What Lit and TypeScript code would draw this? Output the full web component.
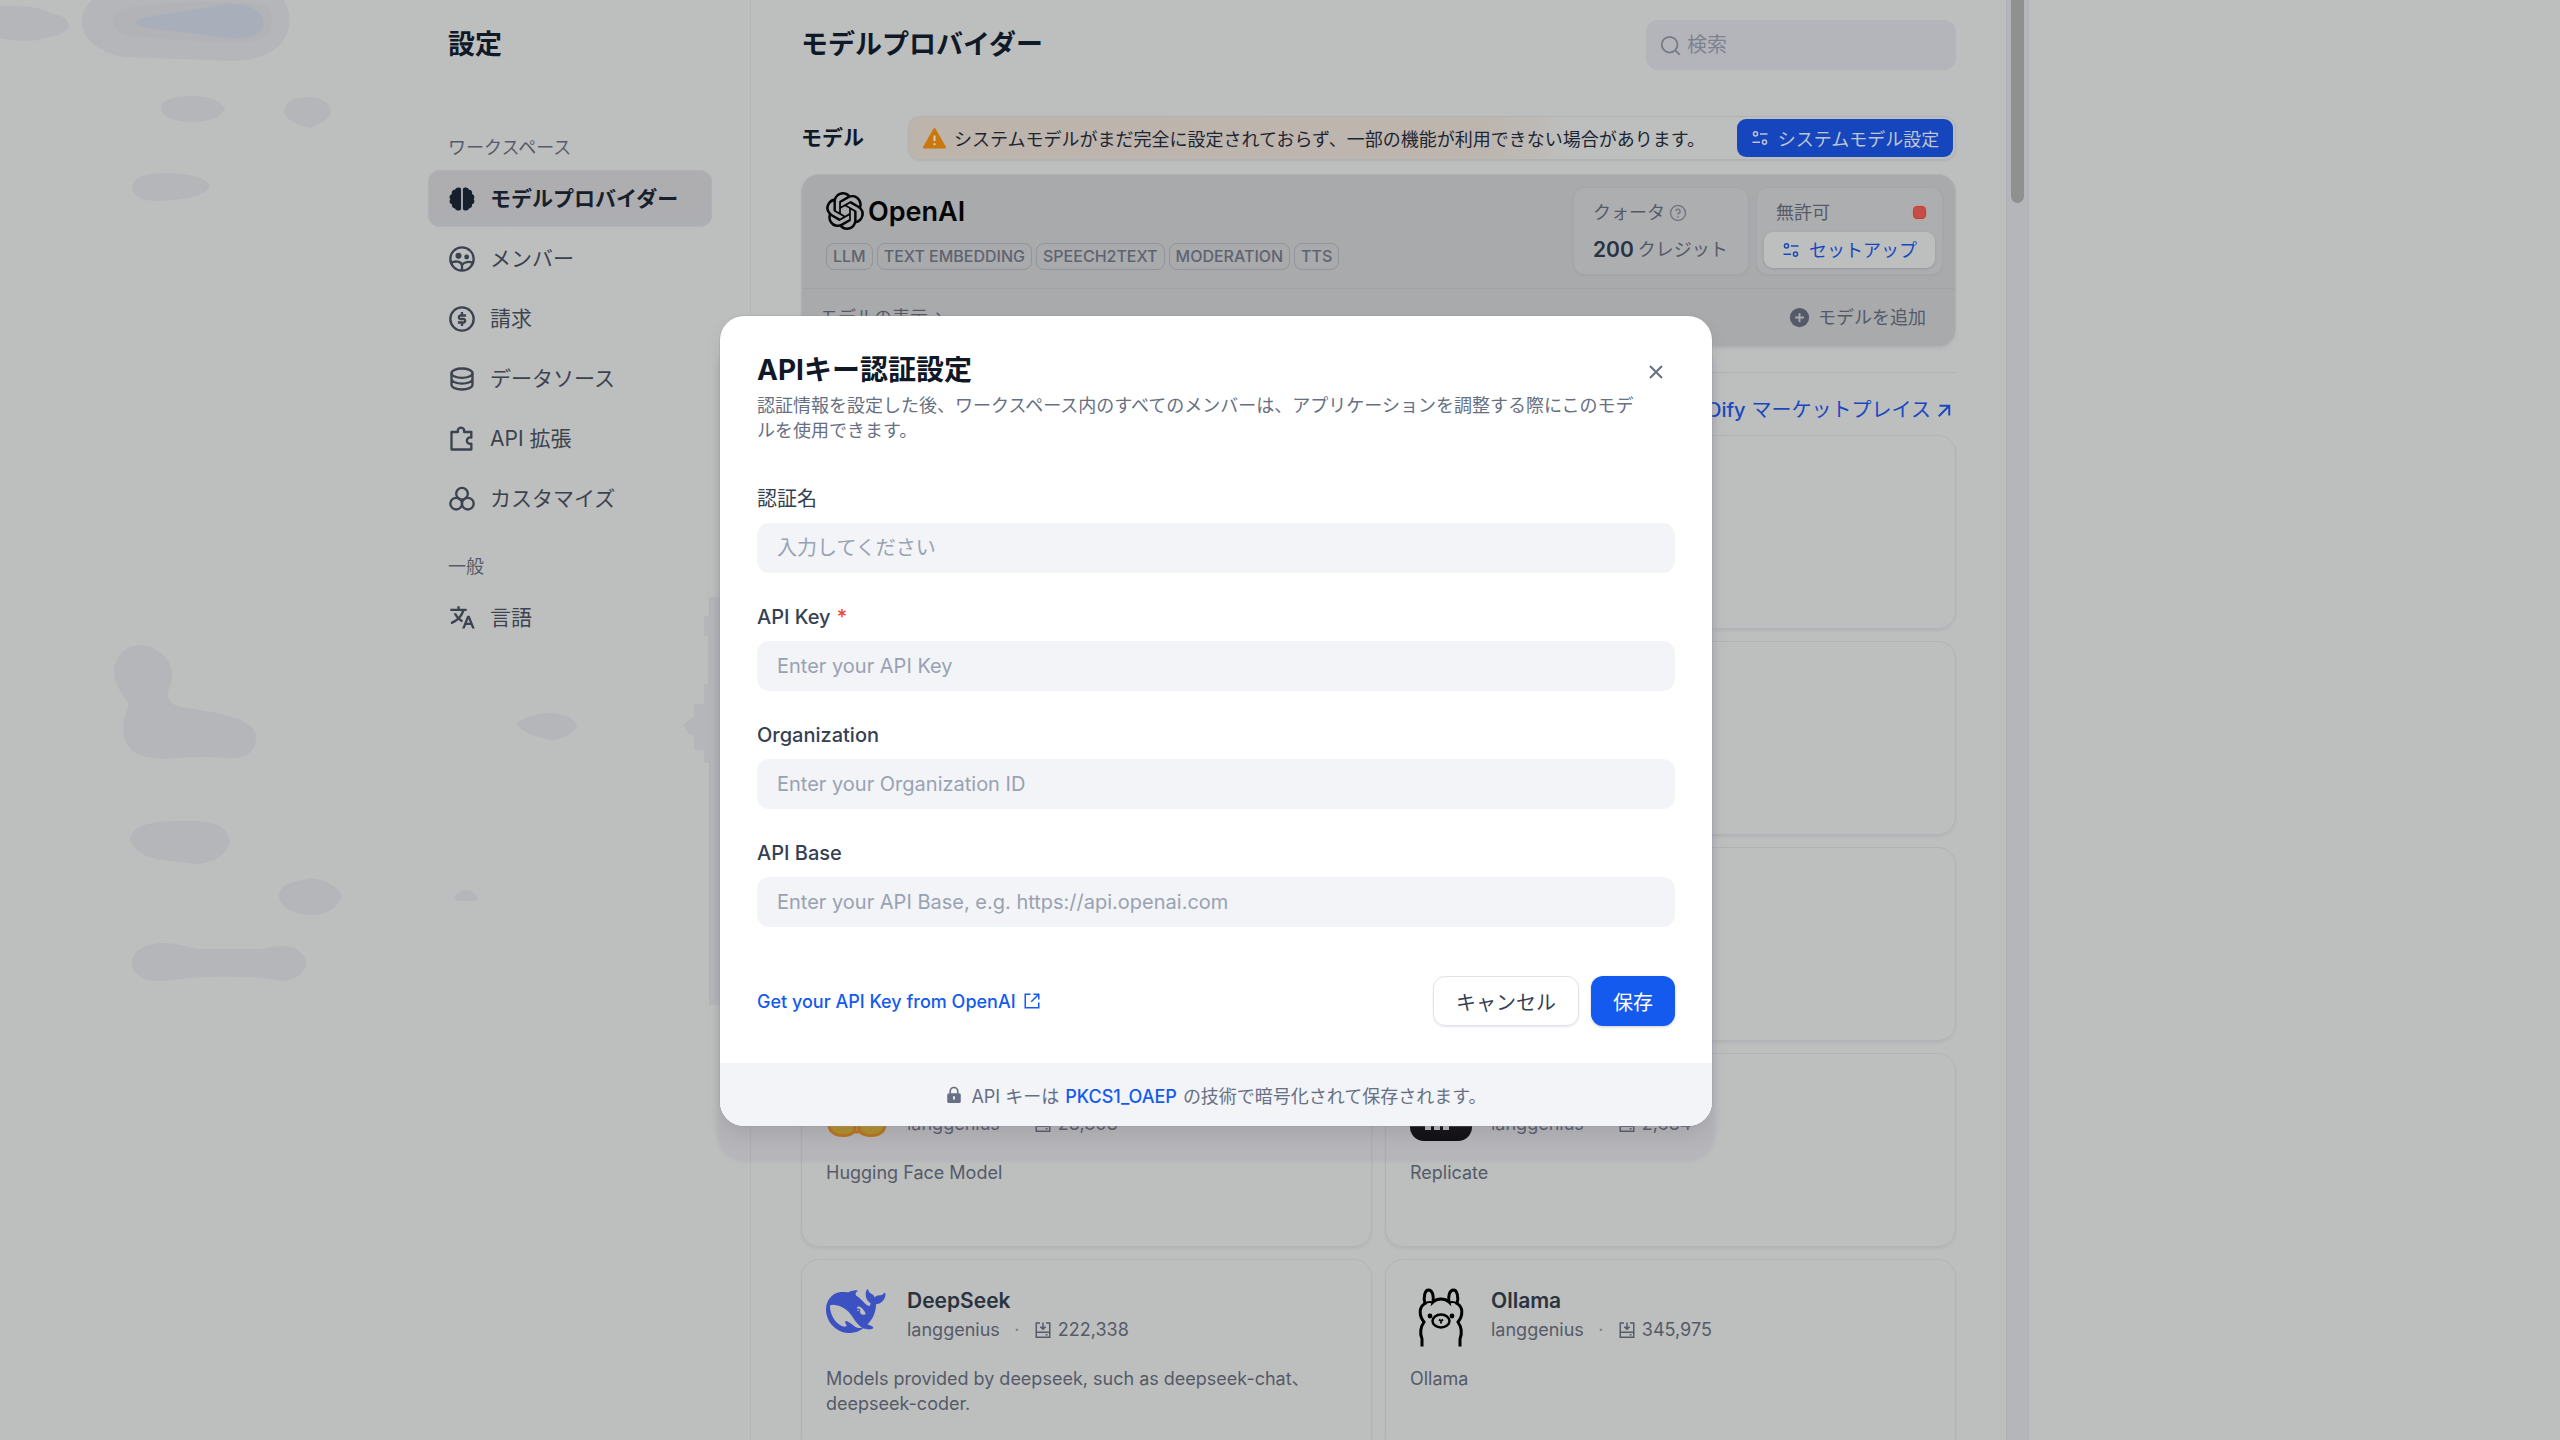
import { LitElement, html, css, svg, nothing, TemplateResult } from "lit";
import { customElement } from "lit/decorators.js";
import { classMap } from "lit/directives/class-map.js";

const stroke = (body: TemplateResult, cls = "") => html`
  <svg class="icon ${cls}" viewBox="0 0 24 24" fill="none" stroke="currentColor" stroke-width="2" aria-hidden="true">${body}</svg>`;
const solid = (body: TemplateResult, cls = "") => html`
  <svg class="icon ${cls}" viewBox="0 0 24 24" fill="currentColor" aria-hidden="true">${body}</svg>`;

const icons = {
  brain: solid(svg`<path d="M11.200 3.200C10.200 1.600 7 1.600 6 4 4 4 2.800 5.800 3.400 7.800 1.200 8.600 .8 11 2 12.200 .8 13.600 1.400 16 3.400 16.600 3 18.600 4.400 20.200 6 20.200 7 22.400 10.200 22.400 11.200 20.800ZM12.800 3.200C13.800 1.600 17 1.600 18 4 20 4 21.200 5.800 20.600 7.800 22.800 8.600 23.200 11 22 12.200 23.200 13.600 22.600 16 20.600 16.600 21 18.600 19.600 20.200 18 20.200 17 22.400 13.800 22.400 12.800 20.800Z"/>`, "lg"),
  members: stroke(svg`<circle cx="12" cy="12" r="10"/><circle cx="9" cy="9.300" r="2.600" fill="currentColor" stroke="none"/><circle cx="16" cy="10.300" r="2.100" fill="currentColor" stroke="none"/><path d="M2.500 15.500C6 13.200 11.500 13.800 12 17.500V22M12 17C13.500 14.300 18.500 13.800 21.300 15.500"/>`, "lg"),
  dollar: stroke(svg`<circle cx="12" cy="12" r="10"/><path d="M15.500 9H10.300A1.600 1.600 0 0 0 10.300 12H13.700A1.600 1.600 0 0 1 13.700 15H8.500M12 6V9M12 15V18"/>`, "lg"),
  database: stroke(svg`<ellipse cx="12" cy="7" rx="9" ry="4"/><path d="M3 7V17C3 19.200 7 21 12 21S21 19.200 21 17V7M3 12C3 14.200 7 16 12 16S21 14.200 21 12"/>`, "lg"),
  puzzle: stroke(svg`<path d="M3 6H8.500A2.800 2.800 0 1 1 13.800 6H20V10.800A2.800 2.800 0 1 0 20 16V21H3Z" stroke-linejoin="round"/>`, "lg"),
  filter: stroke(svg`<circle cx="12" cy="7.500" r="5"/><circle cx="7" cy="16" r="5"/><circle cx="17" cy="16" r="5"/>`, "lg"),
  translate: solid(svg`<path d="M18.5 10L22.9 21H20.745L19.544 18H15.454L14.255 21H12.101L16.5 10H18.5ZM10 2V4H16V6L14.0322 6.0006C13.2425 8.36616 11.9988 10.5057 10.4115 12.301C11.1344 12.9457 11.917 13.5176 12.7475 14.0079L11.9969 15.8855C10.9237 15.2781 9.91944 14.5524 8.99961 13.7249C7.21403 15.332 5.10914 16.5553 2.79891 17.2734L2.26257 15.3442C4.2385 14.7203 6.04543 13.6737 7.59042 12.3021C6.46277 11.0281 5.50873 9.57985 4.76742 8.00028L7.00684 8.00037C7.57018 9.03885 8.23979 10.0033 8.99967 10.877C10.2283 9.46508 11.2205 7.81616 11.9095 6.00101L2 6V4H8V2H10ZM17.5 12.8852L16.253 16H18.745L17.5 12.8852Z"/>`, "lg"),
  search: stroke(svg`<circle cx="11" cy="11" r="9"/><path d="M17.500 17.500L22.500 22.500"/>`, "md"),
  warning: html`<svg class="icon warn" viewBox="0 0 24 24" aria-hidden="true"><path fill="#c8780c" d="M12.900 2.500L23 20.200A1 1 0 0 1 22.200 21.500H1.800A1 1 0 0 1 1 20.200L11.100 2.500A1 1 0 0 1 12.900 2.500Z"/><path fill="#d8cdbf" d="M11 9H13V14.500H11ZM11 16.500H13V18.500H11Z"/></svg>`,
  sliders: stroke(svg`<circle cx="6" cy="6.500" r="2.700"/><path d="M12 6.500H22M2 17.500H12"/><circle cx="18" cy="17.500" r="2.700"/>`),
  help: stroke(svg`<circle cx="12" cy="12" r="10"/><path d="M9.300 9.500A2.700 2.700 0 1 1 12 12.500V14M12 16V18"/>`),
  plus: html`<svg class="icon md" viewBox="0 0 24 24" aria-hidden="true"><circle cx="12" cy="12" r="11" fill="currentColor"/><path d="M12 7V17M7 12H17" stroke="#a9aaac" stroke-width="2.200"/></svg>`,
  chevron: stroke(svg`<path d="M9 5L16 12L9 19"/>`),
  arrow: stroke(svg`<path d="M5 19L19 5M6 5H19V18" stroke-width="2.600"/>`),
  close: stroke(svg`<path d="M4 4L20 20M20 4L4 20" stroke-width="2.800"/>`),
  external: stroke(svg`<path d="M10 3H3V21H21V14M14 3H21V10M21 3L11 13"/>`),
  lock: html`<svg class="icon" viewBox="0 0 24 24" aria-hidden="true"><path d="M7 10V7A5 5 0 0 1 17 7V10" fill="none" stroke="currentColor" stroke-width="2.200"/><rect x="3" y="9.500" width="18" height="13" rx="2" fill="currentColor"/><path d="M12 13.500V18" stroke="#f2f4f7" stroke-width="2.400"/></svg>`,
  install: stroke(svg`<path d="M8 2.500H3V21.500H21V2.500H16M3 15H21M12 2V10.500M8.500 7.500L12 11L15.500 7.500M15.500 18.300H18"/>`),
};

const openaiMark = html`
  <svg class="mark" viewBox="0 0 24 24" fill="currentColor" aria-hidden="true"><path d="M22.2819 9.8211a5.9847 5.9847 0 0 0-.5157-4.9108 6.0462 6.0462 0 0 0-6.5098-2.9A6.0651 6.0651 0 0 0 4.9807 4.1818a5.9847 5.9847 0 0 0-3.9977 2.9 6.0462 6.0462 0 0 0 .7427 7.0966 5.98 5.98 0 0 0 .511 4.9107 6.051 6.051 0 0 0 6.5146 2.9001A5.9847 5.9847 0 0 0 13.2599 24a6.0557 6.0557 0 0 0 5.7718-4.2058 5.9894 5.9894 0 0 0 3.9977-2.9001 6.0557 6.0557 0 0 0-.7475-7.0729zm-9.022 12.6081a4.4755 4.4755 0 0 1-2.8764-1.0408l.1419-.0804 4.7783-2.7582a.7948.7948 0 0 0 .3927-.6813v-6.7369l2.02 1.1686a.071.071 0 0 1 .038.052v5.5826a4.504 4.504 0 0 1-4.4945 4.4944zm-9.6607-4.1254a4.4708 4.4708 0 0 1-.5346-3.0137l.142.0852 4.783 2.7582a.7712.7712 0 0 0 .7806 0l5.8428-3.3685v2.3324a.0804.0804 0 0 1-.0332.0615L9.74 19.9502a4.4992 4.4992 0 0 1-6.1408-1.6464zM2.3408 7.8956a4.485 4.485 0 0 1 2.3655-1.9728V11.6a.7664.7664 0 0 0 .3879.6765l5.8144 3.3543-2.0201 1.1685a.0757.0757 0 0 1-.071 0l-4.8303-2.7865A4.504 4.504 0 0 1 2.3408 7.872zm16.5963 3.8558L13.1038 8.364 15.1192 7.2a.0757.0757 0 0 1 .071 0l4.8303 2.7913a4.4944 4.4944 0 0 1-.6765 8.1042v-5.6772a.79.79 0 0 0-.407-.667zm2.0107-3.0231l-.142-.0852-4.7735-2.7818a.7759.7759 0 0 0-.7854 0L9.409 9.2297V6.8974a.0662.0662 0 0 1 .0284-.0615l4.8303-2.7866a4.4992 4.4992 0 0 1 6.6802 4.66zM8.3065 12.863l-2.02-1.1638a.0804.0804 0 0 1-.038-.0567V6.0742a4.4992 4.4992 0 0 1 7.3757-3.4537l-.142.0805L8.704 5.459a.7948.7948 0 0 0-.3927.6813zm1.0976-2.3654l2.602-1.4998 2.6069 1.4998v2.9994l-2.5974 1.4997-2.6067-1.4997Z"/></svg>`;

const logos: Record<string, TemplateResult> = {
  hugging: html`
    <svg class="logo" viewBox="0 0 62 62" aria-hidden="true">
      <circle cx="31" cy="28" r="25" fill="#c09c1d" stroke="#c17512" stroke-width="3"/>
      <path d="M3 46C3 40 9 38 14 42C18 34 28 40 29 49C28 57 17 58 9 55C5 53 3 50 3 46Z" fill="#b9931f" stroke="#c17512" stroke-width="3"/>
      <path d="M59 46C59 40 53 38 48 42C44 34 34 40 33 49C34 57 45 58 53 55C57 53 59 50 59 46Z" fill="#b9931f" stroke="#c17512" stroke-width="3"/>
    </svg>`,
  replicate: html`
    <svg class="logo" viewBox="0 0 62 62" aria-hidden="true">
      <rect width="62" height="62" rx="14" fill="#000"/>
      <path d="M15 51V14H46V20H21V51ZM24 51V24H46V30H30V51ZM33 51V33H46V39H39V51Z" fill="#bdbfbe"/>
    </svg>`,
  deepseek: html`
    <svg class="logo" viewBox="0 1.300 25 25" fill="#3c51c2" aria-hidden="true"><path d="M23.748 4.482c-.254-.124-.364.113-.512.234-.051.039-.094.09-.137.136-.372.397-.806.657-1.373.626-.829-.046-1.537.214-2.163.848-.133-.782-.575-1.248-1.247-1.548-.352-.156-.708-.311-.955-.65-.172-.241-.219-.51-.305-.774-.055-.16-.11-.323-.293-.35-.2-.031-.278.136-.356.276-.313.572-.434 1.202-.422 1.84.027 1.436.633 2.58 1.838 3.393.137.093.172.187.129.323-.082.28-.18.552-.266.833-.055.179-.137.217-.329.14a5.526 5.526 0 01-1.736-1.18c-.857-.828-1.631-1.742-2.597-2.458a11.365 11.365 0 00-.689-.471c-.985-.957.13-1.743.388-1.836.27-.098.093-.432-.779-.428-.872.004-1.67.295-2.687.684a3.055 3.055 0 01-.465.137 9.597 9.597 0 00-2.883-.102c-1.885.21-3.39 1.102-4.497 2.623C.082 8.606-.231 10.684.152 12.85c.403 2.284 1.569 4.175 3.36 5.653 1.858 1.533 3.997 2.284 6.438 2.14 1.482-.085 3.133-.284 4.994-1.86.47.234.962.327 1.78.397.63.059 1.236-.03 1.705-.128.735-.156.684-.837.419-.961-2.155-1.004-1.682-.595-2.113-.926 1.096-1.296 2.746-2.642 3.392-7.003.05-.347.007-.565 0-.845-.004-.17.035-.237.23-.256a4.173 4.173 0 001.545-.475c1.396-.763 1.96-2.015 2.093-3.517.02-.23-.004-.467-.247-.588zM11.581 18c-2.089-1.642-3.102-2.183-3.52-2.16-.392.024-.321.471-.235.763.09.288.207.486.371.739.114.167.192.416-.113.603-.673.416-1.842-.14-1.897-.167-1.361-.802-2.5-1.86-3.301-3.307-.774-1.393-1.224-2.887-1.298-4.482-.02-.386.093-.522.477-.592a4.696 4.696 0 011.529-.039c2.132.312 3.946 1.265 5.468 2.774.868.86 1.525 1.887 2.202 2.891.72 1.066 1.494 2.082 2.48 2.914.348.292.625.514.891.677-.802.09-2.14.11-3.054-.614zm1-6.44a.306.306 0 01.415-.287.302.302 0 01.2.288.306.306 0 01-.31.307.303.303 0 01-.304-.308zm3.11 1.596c-.2.081-.399.151-.59.16a1.245 1.245 0 01-.798-.254c-.274-.23-.47-.358-.552-.758a1.73 1.73 0 01.016-.588c.07-.327-.008-.537-.239-.727-.187-.156-.426-.199-.688-.199a.559.559 0 01-.254-.078c-.11-.054-.2-.19-.114-.358.028-.054.16-.186.192-.21.356-.202.767-.136 1.146.016.352.144.618.408 1.001.782.391.451.462.576.685.914.176.265.336.537.445.848.067.195-.019.354-.25.452z"/></svg>`,
  ollama: html`
    <svg class="logo" viewBox="0 0 62 62" fill="none" stroke="#000" stroke-width="3" aria-hidden="true">
      <path d="M12 61.500V54C10 49 10 43 14 37C9 31 8.500 22 15 18.500C13 12 15 5 18.500 5C22.500 5 24 11 23 17C27 13 35 13 39 17C38 11 39.500 5 43.500 5C47 5 49 12 47 18.500C53.500 22 53 31 48 37C52 43 52 49 50 54V61.500"/>
      <path d="M15 18.500C17 17 20 16.500 23 17.500M47 18.500C45 17 42 16.500 39 17.500" stroke-width="2"/>
      <ellipse cx="31" cy="36" rx="8.500" ry="6.500" stroke-width="2.500"/>
      <path d="M29 34.500L31 36L33 34.500M31 36V38.500" stroke-width="1.800"/>
      <circle cx="20" cy="31" r="2.400" fill="#000" stroke="none"/><circle cx="42" cy="31" r="2.400" fill="#000" stroke="none"/>
    </svg>`,
};

interface NavItem { label: string; icon: TemplateResult; active?: boolean }
interface Provider { logo?: string; name?: string; installs?: string; text?: string }

const workspaceNav: NavItem[] = [
  { label: "モデルプロバイダー", icon: icons.brain, active: true },
  { label: "メンバー", icon: icons.members },
  { label: "請求", icon: icons.dollar },
  { label: "データソース", icon: icons.database },
  { label: "API 拡張", icon: icons.puzzle },
  { label: "カスタマイズ", icon: icons.filter },
];
const generalNav: NavItem[] = [{ label: "言語", icon: icons.translate }];

const providers: Provider[] = [
  {}, {}, {}, {}, {}, {},
  { logo: "hugging", installs: "28,308", text: "Hugging Face Model" },
  { logo: "replicate", installs: "2,684", text: "Replicate" },
  { logo: "deepseek", name: "DeepSeek", installs: "222,338", text: "Models provided by deepseek, such as deepseek-chat、deepseek-coder." },
  { logo: "ollama", name: "Ollama", installs: "345,975", text: "Ollama" },
];

const fields = [
  { id: "name", label: "認証名", placeholder: "入力してください", required: false },
  { id: "key", label: "API Key", placeholder: "Enter your API Key", required: true },
  { id: "org", label: "Organization", placeholder: "Enter your Organization ID", required: false },
  { id: "base", label: "API Base", placeholder: "Enter your API Base, e.g. https://api.openai.com", required: false },
];

const shared = css`
  * { box-sizing: border-box; }
  h1, h2, h3, p, ul { margin: 0; padding: 0; font-size: inherit; font-weight: inherit; }
  ul { list-style: none; }
  a { color: inherit; text-decoration: none; }
  button, input { font: inherit; color: inherit; border: 0; background: none; padding: 0; margin: 0; }
  button { cursor: pointer; }
  .icon { width: 18px; height: 18px; flex: none; display: block; }
  .icon.md { width: 21px; height: 21px; }
  .icon.lg { width: 28px; height: 28px; }
`;

@customElement("settings-nav")
class SettingsNav extends LitElement {
  static styles = [shared, css`
    :host { display: flex; justify-content: flex-end; padding: 23px 38px 0 24px; border-right: 1px solid #b4b5b7; }
    .nav { width: 284px; }
    .title { padding-left: 20px; font-size: 27px; line-height: 44px; font-weight: 600; color: #101927; }
    .group { padding: 0 20px; margin-top: 65px; font-size: 18px; line-height: 32px; color: #575b69; }
    .group.second { margin-top: 24px; }
    .list { display: flex; flex-direction: column; gap: 3px; margin-top: 6px; }
    .item { display: flex; align-items: center; gap: 14px; width: 100%; height: 57px; padding: 0 20px; border-radius: 12px; font-size: 21px; line-height: 30px; color: #3c4350; text-align: left; }
    .item.active { background: linear-gradient(#aeadaf, #adaeb2); font-weight: 600; color: #16202c; box-shadow: inset 0 0 0 1px #b1b2b5; }
  `];
  private item(n: NavItem) {
    return html`<li><button class=${classMap({ item: true, active: !!n.active })}>${n.icon}<span>${n.label}</span></button></li>`;
  }
  render() {
    return html`
      <nav class="nav">
        <h1 class="title">設定</h1>
        <h2 class="group">ワークスペース</h2>
        <ul class="list">${workspaceNav.map((n) => this.item(n))}</ul>
        <h2 class="group second">一般</h2>
        <ul class="list">${generalNav.map((n) => this.item(n))}</ul>
      </nav>`;
  }
}

@customElement("openai-card")
class OpenaiCard extends LitElement {
  static styles = [shared, css`
    :host { display: block; border: 1px solid #b0b1b4; border-radius: 18px; background: #a9aaac; font-size: 18px; line-height: 25px; color: #555a68; box-shadow: 0 2px 3px #b4b5b8; }
    .head { display: flex; justify-content: space-between; padding: 12px 12px 13px 24px; border-bottom: 1px solid #a2a3a6; }
    .brand { display: flex; align-items: center; gap: 4px; height: 48px; font-size: 27px; font-weight: 600; color: #060606; }
    .mark { width: 38px; height: 38px; }
    .tags { display: flex; gap: 4px; margin-top: 8px; }
    .tag { padding: 0 6px; border: 1px solid #93959e; border-radius: 8px; font-size: 16px; line-height: 25px; font-weight: 500; color: #5e6371; }
    .boxes { display: flex; gap: 7px; }
    .box { height: 88px; border: 1px solid #a6a7aa; border-radius: 12px; background: #adaeb0; box-shadow: 0 1px 2px #a2a3a6; }
    .quota { padding: 12px 19px; width: 176px; }
    .row { display: flex; align-items: center; gap: 4px; white-space: nowrap; }
    .quota .row + .row { margin-top: 12px; }
    .quota .icon { color: #757984; }
    .amount { font-size: 21px; font-weight: 600; color: #2a3341; }
    .auth { padding: 12px 7px 6px; width: 187px; }
    .auth .row { justify-content: space-between; padding: 0 9px 0 12px; }
    .dot { width: 13px; height: 13px; border-radius: 4px; border: 1px solid #c53a33; background: #c44e49; box-shadow: 0 0 0 2px #b4a9a8; }
    .setup { display: flex; align-items: center; justify-content: center; gap: 9px; width: 100%; height: 36px; margin-top: 7px; border-radius: 9px; background: #bdbfbe; color: #1848c0; box-shadow: 0 1px 3px #97989b; }
    .foot { display: flex; align-items: center; justify-content: space-between; padding: 0 29px 0 18px; height: 57px; }
    .foot button { display: flex; align-items: center; gap: 8px; }
    .foot .show { gap: 2px; }
  `];
  render() {
    return html`
      <div class="head">
        <div>
          <div class="brand">${openaiMark}<span>OpenAI</span></div>
          <div class="tags">${["LLM", "TEXT EMBEDDING", "SPEECH2TEXT", "MODERATION", "TTS"].map((t) => html`<span class="tag">${t}</span>`)}</div>
        </div>
        <div class="boxes">
          <div class="box quota">
            <div class="row">クォータ ${icons.help}</div>
            <div class="row"><span class="amount">200</span>クレジット</div>
          </div>
          <div class="box auth">
            <div class="row">無許可<span class="dot"></span></div>
            <button class="setup">${icons.sliders}セットアップ</button>
          </div>
        </div>
      </div>
      <div class="foot">
        <button class="show">モデルの表示${icons.chevron}</button>
        <button>${icons.plus}モデルを追加</button>
      </div>`;
  }
}

@customElement("provider-card")
class ProviderCard extends LitElement {
  static properties = { data: { attribute: false } };
  declare data: Provider;
  static styles = [shared, css`
    :host { display: block; min-height: 194px; padding: 25px 24px; border: 1px solid #b1b3b5; border-radius: 18px; box-shadow: 0 2px 3px #b3b4b8; font-size: 18px; color: #555a69; }
    .top { display: flex; gap: 19px; }
    .logo { width: 62px; height: 62px; flex: none; }
    .name { height: 32px; font-size: 21px; line-height: 32px; font-weight: 600; color: #2b3340; }
    .meta { display: flex; align-items: center; line-height: 26px; }
    .sep { width: 34px; text-align: center; color: #777b86; }
    .count { margin-left: 6px; }
    .text { margin-top: 19px; line-height: 25px; }
  `];
  render() {
    const d = this.data;
    if (!d.logo) return nothing;
    return html`
      <div class="top">
        ${logos[d.logo]}
        <div>
          <h3 class="name">${d.name ?? nothing}</h3>
          <div class="meta">langgenius<span class="sep">·</span>${icons.install}<span class="count">${d.installs}</span></div>
        </div>
      </div>
      <p class="text">${d.text}</p>`;
  }
}

@customElement("provider-page")
class ProviderPage extends LitElement {
  static styles = [shared, css`
    :host { display: block; padding: 20px 50px 0; }
    .header { display: flex; justify-content: space-between; align-items: center; }
    .title { font-size: 27px; line-height: 44px; font-weight: 600; color: #101927; }
    .search { display: flex; align-items: center; gap: 6px; width: 310px; height: 50px; padding: 0 14px; border-radius: 12px; background: #b4b5ba; color: #757984; font-size: 20px; }
    .search input { flex: 1; min-width: 0; outline: 0; }
    .search input::placeholder { color: #7d8290; opacity: 1; }
    .bar { display: flex; align-items: center; justify-content: space-between; margin-top: 46px; }
    .sub { font-size: 21px; line-height: 30px; font-weight: 600; color: #101927; }
    .notice { display: flex; align-items: center; gap: 7px; width: 1048px; height: 44px; padding: 0 2px 0 13px; border: 1px solid #b1b2b3; border-radius: 12px; background: linear-gradient(90deg, #bdb4ac, #bdb6af 55%, #bdbab6 60%, #bdbfbe 63%); box-shadow: 0 1px 2px #b0b1b4; font-size: 18px; color: #1c2531; }
    .notice .warn { width: 25px; height: 25px; }
    .notice span { flex: 1; white-space: nowrap; }
    .system { display: flex; align-items: center; justify-content: center; gap: 9px; width: 216px; height: 38px; border-radius: 9px; background: #1646bd; color: #bfc6d2; }
    openai-card { margin-top: 14px; }
    .market { display: flex; align-items: center; justify-content: flex-end; margin-top: 25px; padding: 23px 3px 10px; border-top: 1px solid #b0b2b4; font-size: 20px; line-height: 29px; color: #1848c0; }
    .market a { display: flex; align-items: center; gap: 4px; }
    .latin { font-weight: 500; margin-right: 2px; }
    .grid { display: grid; grid-template-columns: repeat(2, minmax(0, 1fr)); gap: 12px 13px; }
  `];
  render() {
    return html`
      <header class="header">
        <h2 class="title">モデルプロバイダー</h2>
        <label class="search">${icons.search}<input type="search" placeholder="検索" aria-label="検索"></label>
      </header>
      <div class="bar">
        <h3 class="sub">モデル</h3>
        <div class="notice">
          ${icons.warning}<span>システムモデルがまだ完全に設定されておらず、一部の機能が利用できない場合があります。</span>
          <button class="system">${icons.sliders}システムモデル設定</button>
        </div>
      </div>
      <openai-card></openai-card>
      <div class="market"><a href="#marketplace"><span class="latin">Dify</span>マーケットプレイス${icons.arrow}</a></div>
      <div class="grid">${providers.map((p) => html`<provider-card .data=${p}></provider-card>`)}</div>`;
  }
}

@customElement("credential-dialog")
class CredentialDialog extends LitElement {
  static styles = [shared, css`
    :host { display: block; width: 992px; border-radius: 24px; background: #fff; overflow: hidden; box-shadow: 0 0 0 1px rgba(150, 150, 170, .3), 0 10px 18px -2px rgba(80, 75, 75, .16), 0 32px 3px 4px rgba(130, 125, 165, .12); color: #354052; }
    .body { padding: 37px; }
    .head { position: relative; }
    .title { font-size: 28px; line-height: 34px; font-weight: 700; color: #101828; }
    .lead { margin-top: 6px; padding-right: 27px; font-size: 18px; line-height: 25px; color: #676f83; }
    .close { position: absolute; top: 0; right: 0; width: 38px; height: 38px; display: grid; place-items: center; color: #676f83; }
    .fields { display: flex; flex-direction: column; gap: 29px; margin-top: 41px; }
    .field { display: flex; flex-direction: column; gap: 9px; font-size: 20px; line-height: 30px; }
    .field label { font-weight: 500; }
    .field label:lang(ja) { font-weight: 400; }
    .req { margin-left: 6px; color: #f04438; }
    .field input { width: 100%; height: 50px; padding: 0 20px; border-radius: 12px; background: #f2f4f7; outline: 0; }
    .field input::placeholder { color: #98a2b2; opacity: 1; }
    .actions { display: flex; align-items: center; gap: 12px; margin-top: 49px; font-size: 20px; }
    .help { display: flex; align-items: center; gap: 7px; margin-right: auto; font-size: 18px; font-weight: 500; color: #155aef; }
    .btn { height: 50px; padding: 0 22px; border-radius: 12px; }
    .cancel { border: 1px solid #e0e2e8; box-shadow: 0 1px 2px #e4e6eb; }
    .save { background: #155aef; color: #fff; box-shadow: 0 1px 3px #c9cdd6; }
    .foot { display: flex; align-items: center; justify-content: center; gap: 8px; height: 63px; background: #f2f4f7; font-size: 18px; color: #676f83; }
    .foot a { color: #155aef; margin: 0 6px; font-weight: 500; }
  `];
  render() {
    return html`
      <form class="body" @submit=${(e: Event) => e.preventDefault()}>
        <div class="head">
          <h2 class="title">APIキー認証設定</h2>
          <p class="lead">認証情報を設定した後、ワークスペース内のすべてのメンバーは、アプリケーションを調整する際にこのモデルを使用できます。</p>
          <button class="close" type="button" aria-label="閉じる">${icons.close}</button>
        </div>
        <div class="fields">
          ${fields.map((f) => html`
            <div class="field">
              <label for=${f.id} lang=${f.id === "name" ? "ja" : "en"}>${f.label}${f.required ? html`<span class="req">*</span>` : nothing}</label>
              <input id=${f.id} type="text" placeholder=${f.placeholder}>
            </div>`)}
        </div>
        <div class="actions">
          <a class="help" href="#api-keys">Get your API Key from OpenAI ${icons.external}</a>
          <button class="btn cancel" type="button">キャンセル</button>
          <button class="btn save" type="submit">保存</button>
        </div>
      </form>
      <div class="foot">${icons.lock}<span>API キーは<a href="#oaep">PKCS1_OAEP</a>の技術で暗号化されて保存されます。</span></div>`;
  }
}

@customElement("app-root")
class AppRoot extends LitElement {
  static styles = [shared, css`
    :host { display: block; position: relative; height: 100vh; overflow: hidden; background: #bdbfbe; font-family: Inter, "Noto Sans CJK JP", sans-serif; }
    .wash { position: absolute; top: 0; left: 0; width: 760px; height: 1100px; }
    .layout { position: relative; display: grid; grid-template-columns: minmax(0, 751fr) minmax(0, 1255fr) 23px minmax(0, 531fr); height: 100%; }
    .track { background: #b5b6ba; border: solid #b0b1b5; border-width: 0 1px; display: flex; justify-content: center; }
    .thumb { width: 13px; height: 203px; border-radius: 0 0 7px 7px; background: #8f908f; }
    .overlay { position: absolute; inset: 0; display: flex; align-items: center; justify-content: center; padding: 2px 5% 0 0; }
  `];
  render() {
    return html`
      <svg class="wash" viewBox="0 0 760 1100" fill="#b5b6ba" aria-hidden="true">
        <path d="M0 6C30 5 42 8 52 14C64 15 69 20 69 26C66 36 50 36 38 40C26 42 8 40 0 38Z"/>
        <path d="M92 0H284C296 20 292 60 232 61L124 57C84 50 70 20 92 0Z"/>
        <path d="M120 10C150 0 250 0 266 6C278 16 272 38 258 40C230 46 160 38 130 36C108 32 110 14 120 10Z" fill="#b2b3b7"/>
        <path d="M135 22C136 17 180 12 205 8C225 2 250 3 258 12C268 20 264 34 250 37C235 40 210 36 190 33C160 29 136 28 135 22Z" fill="#a9aebb"/>
        <path d="M161 109C160 100 174 96 192 96C210 96 222 102 225 109C222 117 208 122 194 122C178 122 162 118 161 109Z"/>
        <path d="M284 111C286 100 296 97 308 97C322 97 330 104 331 111C330 121 318 124 311 128C302 126 286 122 284 111Z"/>
        <path d="M132 188C133 176 148 174 160 173C176 174 202 172 210 186C206 196 186 199 172 200C152 202 134 202 132 188Z"/>
        <path d="M114 672C114 656 126 645 141 645C158 646 172 660 172 674C172 688 166 690 168 698C172 708 186 707 200 710C224 714 256 720 256 737C256 752 246 759 228 758C204 756 184 757 166 759C138 758 124 752 123 727C124 712 130 708 128 702C122 692 114 686 114 672Z"/>
        <path d="M130 840C132 822 160 821 186 821C214 820 228 826 230 842C226 858 208 864 194 864C178 860 138 864 130 840Z"/>
        <path d="M279 896C280 882 296 882 310 878C328 880 340 888 342 897C336 910 324 915 310 915C294 914 280 908 279 896Z"/>
        <path d="M454 897C458 893 460 890 467 890C474 891 478 896 478 899L475 901H457Z"/>
        <path d="M132 963C132 950 148 942 166 943C182 944 192 949 200 949H262C272 946 290 944 296 949C304 954 306 958 306 966C300 980 286 982 274 980C260 976 210 976 188 978C170 982 144 982 140 976C134 972 132 970 132 963Z"/>
        <path d="M516 724C520 720 532 713 552 713C566 714 576 720 577 727C572 734 562 740 552 740C540 738 524 734 516 724Z"/>
        <path d="M725 597H709V616H704V636H708V684H704V704H694V716L683 725L690 735H694V750H704V763H709V1005H725Z"/>
      </svg>
      <div class="layout">
        <settings-nav></settings-nav>
        <provider-page></provider-page>
        <div class="track"><div class="thumb"></div></div>
      </div>
      <div class="overlay"><credential-dialog role="dialog" aria-modal="true" aria-label="APIキー認証設定"></credential-dialog></div>`;
  }
}
